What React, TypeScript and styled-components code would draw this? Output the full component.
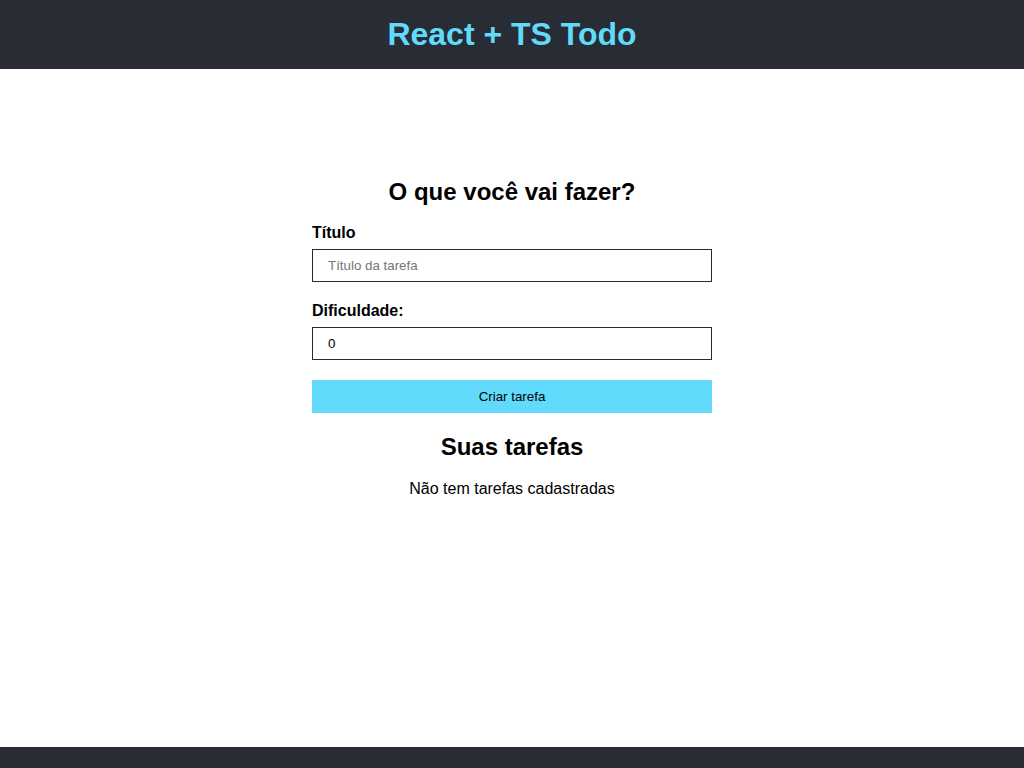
import React from "react";
import styled, { createGlobalStyle } from "styled-components";

const Global = createGlobalStyle`
  html, body { margin: 0; padding: 0; }
  body { font-family: "Liberation Sans", Arial, sans-serif; color: #000; background: #fff; }
  * { box-sizing: border-box; }
`;

const Page = styled.div`
  min-height: 100vh;
  display: flex;
  flex-direction: column;
`;

const Header = styled.header`
  height: 69px;
  background: #282c34;
  display: flex;
  align-items: center;
  justify-content: center;
`;

const Title = styled.h1`
  margin: 0;
  color: #61dafb;
  font-size: 32px;
  font-weight: 700;
`;

const Main = styled.main`
  flex: 1;
  display: flex;
  flex-direction: column;
  align-items: center;
  padding-top: 109px;
`;

const Section = styled.section`
  width: 400px;
  display: flex;
  flex-direction: column;
`;

const Heading = styled.h2`
  margin: 0;
  font-size: 24px;
  font-weight: 700;
  text-align: center;
`;

const Form = styled.form`
  display: flex;
  flex-direction: column;
  margin-top: 18px;
`;

const Field = styled.div`
  display: flex;
  flex-direction: column;
  gap: 7px;
  margin-bottom: 20px;
`;

const Label = styled.label`
  font-size: 16px;
  font-weight: 700;
  line-height: 18px;
`;

const Input = styled.input`
  height: 33px;
  border: 1px solid #282c34;
  border-radius: 0;
  padding: 0 15px;
  font-family: "Liberation Sans", Arial, sans-serif;
  font-size: 13.333px;
  color: #000;
  outline: none;
  &::placeholder { color: #757575; }
`;

const Button = styled.button`
  height: 33px;
  border: none;
  background: #61dafb;
  font-family: "Liberation Sans", Arial, sans-serif;
  font-size: 13.333px;
  color: #000;
  cursor: pointer;
`;

const ListHeading = styled(Heading)`
  margin-top: 20px;
`;

const Empty = styled.p`
  margin: 19px 0 0;
  font-size: 16px;
  line-height: 18px;
  text-align: center;
`;

const Footer = styled.footer`
  height: 21px;
  background: #282c34;
`;

export default function App() {
  return (
    <Page>
      <Global />
      <Header>
        <Title>React + TS Todo</Title>
      </Header>
      <Main>
        <Section>
          <Heading>O que você vai fazer?</Heading>
          <Form onSubmit={(e) => e.preventDefault()}>
            <Field>
              <Label htmlFor="title">Título</Label>
              <Input id="title" type="text" placeholder="Título da tarefa" />
            </Field>
            <Field>
              <Label htmlFor="difficulty">Dificuldade:</Label>
              <Input id="difficulty" type="text" defaultValue="0" />
            </Field>
            <Button type="submit">Criar tarefa</Button>
          </Form>
          <ListHeading>Suas tarefas</ListHeading>
          <Empty>Não tem tarefas cadastradas</Empty>
        </Section>
      </Main>
      <Footer />
    </Page>
  );
}
